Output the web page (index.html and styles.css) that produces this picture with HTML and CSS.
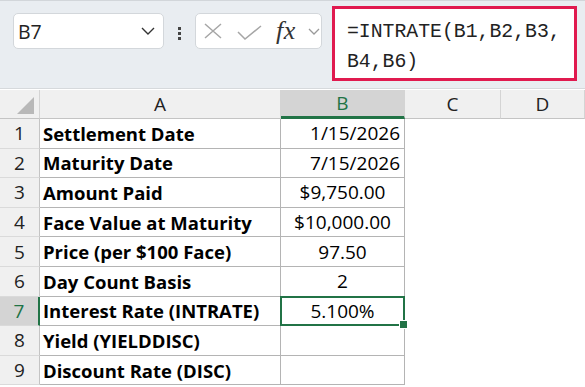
FILE: index.html
```html
<!DOCTYPE html>
<html lang="en">
<head>
  <meta charset="UTF-8" />
  <title>INTRATE</title>
  <link rel="stylesheet" href="styles.css">
</head>
<body>

  <!-- Formula bar -->
  <div class="toolbar">
    <div class="namebox">
      <span>B7</span>
      <svg class="chev" width="14" height="8" viewBox="0 0 14 8"><path d="M1 1 L7 7 L13 1" fill="none" stroke="#333" stroke-width="1.4"/></svg>
    </div>
    <div class="dots"><i></i><i></i><i></i></div>
    <div class="fxbox">
      <svg width="18" height="16" viewBox="0 0 18 16"><path d="M1 1 L17 15 M17 1 L1 15" stroke="#a6a6a6" stroke-width="1.5" fill="none"/></svg>
      <svg width="25" height="15" viewBox="0 0 25 15"><path d="M1 7 L8 14 L24 1" stroke="#a6a6a6" stroke-width="1.5" fill="none"/></svg>
      <span class="fx">fx</span>
      <svg class="chev-s" width="12" height="7" viewBox="0 0 12 7"><path d="M1 1 L6 6 L11 1" fill="none" stroke="#9a9a9a" stroke-width="1.3"/></svg>
    </div>
    <div class="formula">=INTRATE(B1,B2,B3,<br>B4,B6)</div>
  </div>

  <!-- Sheet -->
  <div class="sheet">
    <div class="hdr corner"><span class="tri"></span></div>
    <div class="hdr">A</div>
    <div class="hdr sel-col">B</div>
    <div class="hdr">C</div>
    <div class="hdr">D</div>

    <div class="rh">1</div><div class="c lbl">Settlement Date</div><div class="c val right">1/15/2026</div><div class="e"></div><div class="e"></div>
    <div class="rh">2</div><div class="c lbl">Maturity Date</div><div class="c val right">7/15/2026</div><div class="e"></div><div class="e"></div>
    <div class="rh">3</div><div class="c lbl">Amount Paid</div><div class="c val">$9,750.00</div><div class="e"></div><div class="e"></div>
    <div class="rh">4</div><div class="c lbl">Face Value at Maturity</div><div class="c val">$10,000.00</div><div class="e"></div><div class="e"></div>
    <div class="rh">5</div><div class="c lbl">Price (per $100 Face)</div><div class="c val">97.50</div><div class="e"></div><div class="e"></div>
    <div class="rh">6</div><div class="c lbl">Day Count Basis</div><div class="c val">2</div><div class="e"></div><div class="e"></div>
    <div class="rh sel-row">7</div><div class="c lbl">Interest Rate (INTRATE)</div><div class="c val active">5.100%<span class="handle"></span></div><div class="e"></div><div class="e"></div>
    <div class="rh">8</div><div class="c lbl">Yield (YIELDDISC)</div><div class="c val"></div><div class="e"></div><div class="e"></div>
    <div class="rh">9</div><div class="c lbl">Discount Rate (DISC)</div><div class="c val"></div><div class="e"></div><div class="e"></div>
  </div>

</body>
</html>
```

FILE: styles.css
```css
body {
  margin: 0;
  font-family: 'Open Sans', 'Liberation Sans', sans-serif;
  background-color: #ffffff;
  color: #000;
  overflow: hidden;
}

/* ---------- formula bar ---------- */

.toolbar {
  display: flex;
  align-items: flex-start;
  height: 89px;
  background-color: #e9edf1;
  border-top: 1px solid #d2d6da;
  border-bottom: 1px solid #d6d9dc;
  box-sizing: border-box;
  padding: 12px 0 0 13px;
}

.namebox {
  display: flex;
  align-items: center;
  justify-content: space-between;
  width: 151px;
  height: 36px;
  box-sizing: border-box;
  background-color: #fff;
  border: 1px solid #d3d7db;
  border-radius: 5px;
  padding: 0 8px 0 4px;
  font-size: 19.5px;
  color: #222;
}

.dots {
  display: flex;
  flex-direction: column;
  gap: 2px;
  margin: 14px 14px 0 14px;
}

.dots i {
  display: block;
  width: 3px;
  height: 3px;
  background-color: #444;
}

.fxbox {
  display: flex;
  align-items: center;
  width: 127px;
  height: 36px;
  box-sizing: border-box;
  background-color: #fff;
  border: 1px solid #d3d7db;
  border-radius: 5px;
  padding: 0 0 0 8px;
}

.fxbox svg:nth-child(2) {
  margin-left: 15px;
  margin-top: 2px;
}

.fx {
  font-family: 'Liberation Serif', serif;
  font-style: italic;
  font-size: 26px;
  line-height: 1;
  color: #333;
  margin-left: 14px;
  letter-spacing: 0.5px;
}

.chev-s {
  margin-left: 12px;
}

.formula {
  margin: -7px 0 0 10px;
  width: 245px;
  height: 75px;
  box-sizing: border-box;
  background-color: #fff;
  border: 3px solid #e01a4f;
  padding: 8px 0 0 12px;
  font-family: 'Liberation Mono', monospace;
  font-size: 19.8px;
  line-height: 30px;
  color: #222;
}

/* ---------- sheet ---------- */

.sheet {
  display: grid;
  grid-template-columns: 40px 241px 124px 96px 84px;
  grid-template-rows: 29px repeat(9, 29.6px);
  margin-top: 1px;
}

.hdr {
  background-color: #f0f0f0;
  border-right: 1px solid #d4d4d4;
  border-bottom: 1px solid #c4c4c4;
  display: flex;
  align-items: center;
  justify-content: center;
  font-size: 19px;
  color: #222;
  box-sizing: border-box;
}

.corner {
  position: relative;
}

.tri {
  position: absolute;
  right: 5px;
  bottom: 4px;
  width: 0;
  height: 0;
  border-left: 17px solid transparent;
  border-bottom: 17px solid #b8b8b8;
}

.sel-col {
  background-color: #d4d4d4;
  color: #217346;
  border-bottom: 3px solid #217346;
}

.rh {
  background-color: #f0f0f0;
  border-right: 1px solid #c4c4c4;
  border-bottom: 1px solid #dadada;
  display: flex;
  align-items: center;
  justify-content: center;
  font-size: 19px;
  color: #222;
  box-sizing: border-box;
}

.sel-row {
  background-color: #d4d4d4;
  color: #217346;
  border-right: 2px solid #217346;
}

.c {
  display: flex;
  align-items: center;
  box-sizing: border-box;
  border-right: 1px solid #b4b4b4;
  border-bottom: 1px solid #b4b4b4;
  font-size: 19px;
  white-space: nowrap;
}

.lbl {
  font-weight: bold;
  font-size: 18.5px;
  padding-left: 3px;
}

.val {
  justify-content: center;
}

.val.right {
  justify-content: flex-end;
  padding-right: 4px;
}

.active {
  position: relative;
  border: 2px solid #217346;
  margin: -1px 0 0 -1px;
}

.handle {
  position: absolute;
  right: -5px;
  bottom: -5px;
  width: 7px;
  height: 7px;
  background-color: #217346;
  border: 1px solid #fff;
}

.e {
  background-color: #fff;
}
```
